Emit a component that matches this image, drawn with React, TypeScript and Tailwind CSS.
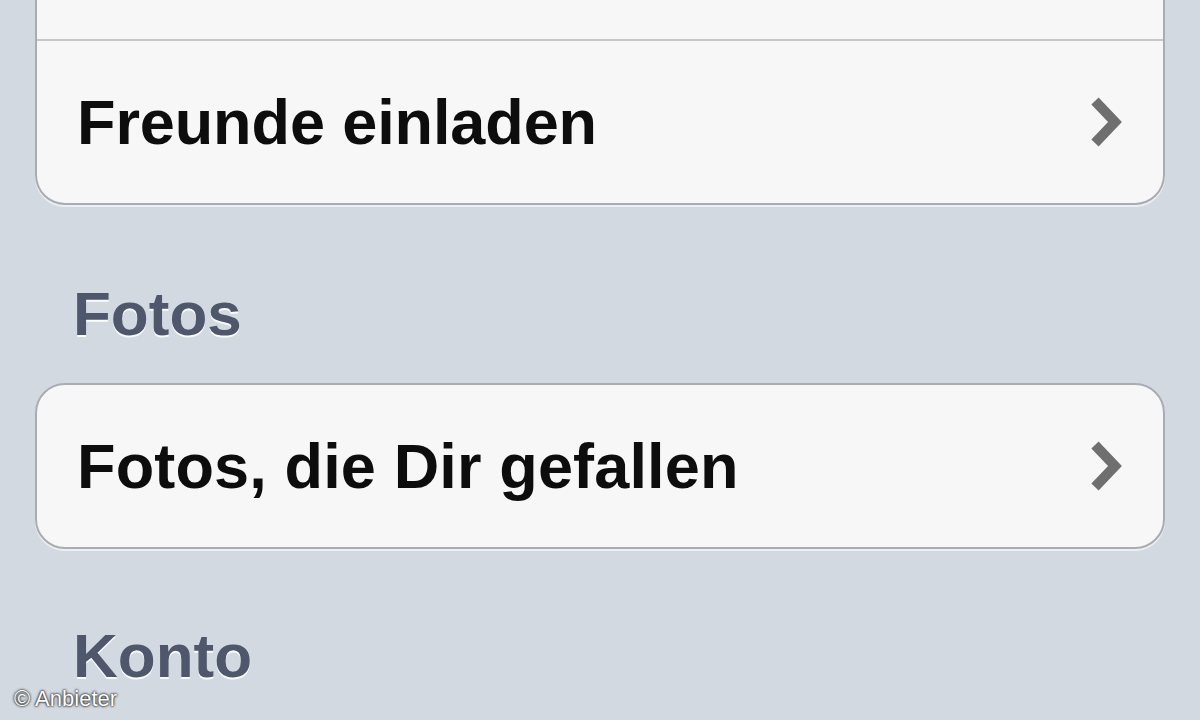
import React from "react";

function Chevron() {
  return (
    <svg width="40" height="52" viewBox="0 0 40 52" className="shrink-0">
      <polyline
        points="10,5 30,26 10,47"
        fill="none"
        stroke="#6f6f6f"
        strokeWidth="10"
        strokeLinejoin="miter"
        strokeLinecap="butt"
      />
    </svg>
  );
}

function Row({ label, tracking }: { label: string; tracking: string }) {
  return (
    <div className="flex h-[162px] items-center justify-between pl-[40px] pr-[38px]">
      <span className={`text-[63px] font-bold leading-none text-[#0d0d0d] ${tracking}`}>{label}</span>
      <Chevron />
    </div>
  );
}

function Heading({ label }: { label: string }) {
  return (
    <div
      className="h-[62px] pl-[73px] text-[62px] font-bold leading-none text-[#4e576b]"
      style={{ textShadow: "0 2px 0 rgba(255,255,255,0.9)" }}
    >
      {label}
    </div>
  );
}

export default function App() {
  return (
    <div
      className="relative h-[720px] w-[1200px] overflow-hidden bg-[#d3d9e0]"
      style={{ fontFamily: '"Liberation Sans", Arial, Helvetica, sans-serif' }}
    >
      <div className="mx-[35px] rounded-b-[30px] border-2 border-t-0 border-[#a9adb2] bg-[#f7f7f7] shadow-[0_2px_0_rgba(255,255,255,0.6)]">
        <div className="h-[41px] border-b-2 border-[#c4c6c8]" />
        <Row label="Freunde einladen" tracking="tracking-[-0.1px]" />
      </div>

      <div className="mt-[78px]">
        <Heading label="Fotos" />
      </div>

      <div className="mx-[35px] mt-[38px] rounded-[30px] border-2 border-[#a9adb2] bg-[#f7f7f7] shadow-[0_2px_0_rgba(255,255,255,0.6)]">
        <Row label="Fotos, die Dir gefallen" tracking="tracking-[0.15px]" />
      </div>

      <div className="mt-[76px]">
        <Heading label="Konto" />
      </div>

      <div
        className="absolute bottom-[10px] left-[14px] text-[22px] leading-none text-white"
        style={{ textShadow: "0 0 2px #000, 0 0 3px rgba(0,0,0,0.8)" }}
      >
        © Anbieter
      </div>
    </div>
  );
}
